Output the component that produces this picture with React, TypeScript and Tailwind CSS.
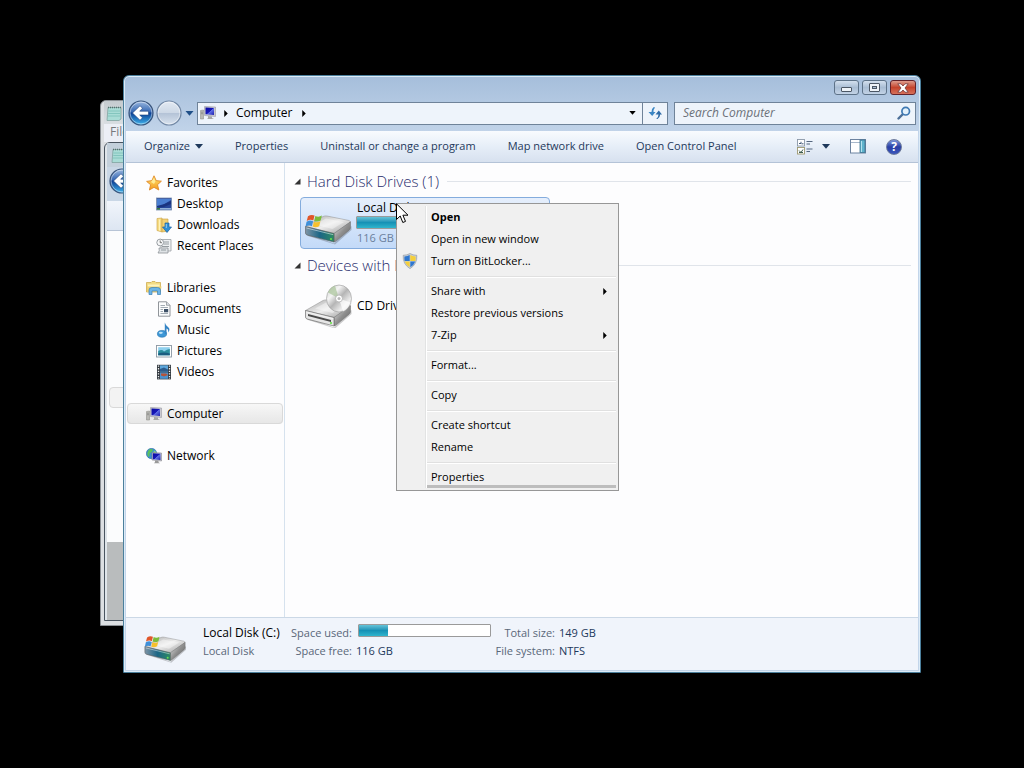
import React, { useState } from 'react';

type IconProps = { className?: string };

const WinFlag: React.FC = () => (
  <g>
    <path d="M3 3.500Q7 .5 11 2.500L9.500 8.500Q6 6.500 1.500 9Z" fill="#e0562a" />
    <path d="M12 3Q16 5 20 2.500L18.500 8.500Q14.500 10.500 10.500 9Z" fill="#7cbb3a" />
    <path d="M1.300 10Q5.500 7.500 9.200 9.500L7.800 15.500Q4 13.500 0 16Z" fill="#3f8fd8" />
    <path d="M10.300 10Q14 11.500 18.200 9.500L16.700 15.500Q12.500 17.500 8.800 16Z" fill="#f6c02c" />
  </g>
);

const DiskBody: React.FC<{ front: string }> = ({ front }) => (
  <g>
    <path d="M2 25L30 35.500L47.500 18V22L31 36.500L4 28Z" fill="#000" opacity=".2" />
    <path d="M1.500 18.500L19 8.500Q21 7.600 23 8L45 12.500Q47 13.200 46 14.500L30 25.500Z" fill="url(#diskTop)" stroke="#8d8d8d" strokeWidth=".5" />
    <path d="M30 25.500L46.500 13.800V19.500Q46.500 21 45 22.300L31.500 33.500L30 34Z" fill="url(#diskSide)" stroke="#6d6d6d" strokeWidth=".5" />
    <path d="M1.500 18.500L30 25.500V34L3 27Q1.500 26.400 1.500 25Z" fill={front} stroke="#5b5b5b" strokeWidth=".6" />
    <path d="M11 16.500L22 10.500L40 14L28.500 21Z" fill="#fff" opacity=".4" />
    <path d="M2.500 20L29.300 26.700" stroke="#fff" strokeOpacity=".7" strokeWidth=".7" />
    <circle cx="27" cy="31" r="1.100" fill="#6be04c" />
  </g>
);

const SharedDefs: React.FC = () => (
  <svg className="absolute size-0" aria-hidden="true">
    <defs>
      <linearGradient id="diskTop" x1="0" y1="0" x2="1" y2="1">
        <stop offset="0" stopColor="#a9a9a9" />
        <stop offset=".5" stopColor="#ededed" />
        <stop offset="1" stopColor="#9d9d9d" />
      </linearGradient>
      <linearGradient id="diskSide" x1="0" y1="0" x2="1" y2="1">
        <stop offset="0" stopColor="#eee" />
        <stop offset=".5" stopColor="#8f8f8f" />
        <stop offset="1" stopColor="#5f5f5f" />
      </linearGradient>
      <linearGradient id="diskTeal" x1="0" y1="0" x2="1" y2="0">
        <stop offset="0" stopColor="#7e94a6" />
        <stop offset=".5" stopColor="#1c6686" />
        <stop offset="1" stopColor="#2d8a63" />
      </linearGradient>
      <linearGradient id="cdFace" x1="0" y1="0" x2="1" y2="1">
        <stop offset="0" stopColor="#c9cdc9" />
        <stop offset=".3" stopColor="#f4f4f4" />
        <stop offset=".5" stopColor="#b5b5b5" />
        <stop offset=".75" stopColor="#efefef" />
        <stop offset="1" stopColor="#bcbcbc" />
      </linearGradient>
      <linearGradient id="orb" x1="0" y1="0" x2="0" y2="1">
        <stop offset="0" stopColor="#9db9e0" />
        <stop offset=".45" stopColor="#3769b4" />
        <stop offset=".5" stopColor="#0c3f93" />
        <stop offset="1" stopColor="#3fb4ee" />
      </linearGradient>
      <linearGradient id="orbOff" x1="0" y1="0" x2="0" y2="1">
        <stop offset="0" stopColor="#e3eaf3" />
        <stop offset=".48" stopColor="#cdd8e6" />
        <stop offset=".5" stopColor="#b3c2d6" />
        <stop offset="1" stopColor="#d9e3ef" />
      </linearGradient>
      <linearGradient id="star" x1="0" y1="0" x2="0" y2="1">
        <stop offset="0" stopColor="#ffe675" />
        <stop offset="1" stopColor="#f59a1c" />
      </linearGradient>
      <linearGradient id="screen" x1="0" y1="0" x2="1" y2="1">
        <stop offset="0" stopColor="#0a0aa0" />
        <stop offset=".5" stopColor="#1717b8" />
        <stop offset=".55" stopColor="#5f6fe6" />
        <stop offset="1" stopColor="#1d1dae" />
      </linearGradient>
    </defs>
  </svg>
);

const HardDiskIcon: React.FC<IconProps> = ({ className }) => (
  <svg viewBox="0 0 48 38" className={className} aria-hidden="true">
    <DiskBody front="url(#diskTeal)" />
    <g transform="translate(1.500 5.500) scale(.82)">
      <WinFlag />
    </g>
  </svg>
);

const CdDriveIcon: React.FC<IconProps> = ({ className }) => (
  <svg viewBox="0 0 48 44" className={className} aria-hidden="true">
    <g transform="translate(0 8)">
      <DiskBody front="#e6e6e6" />
      <path d="M4 22L27 28V30L4 24Z" fill="#4a4a4a" />
    </g>
    <ellipse cx="35" cy="14.500" rx="12.500" ry="13.500" fill="url(#cdFace)" stroke="#999" strokeWidth=".6" />
    <path d="M35 14.500L24 8.500Q27 2.500 31 1.700Z" fill="#a9c59a" opacity=".7" />
    <path d="M35 14.500L46.500 18.500Q44 25.500 39 27.500Z" fill="#fff" opacity=".7" />
    <circle cx="35" cy="14.500" r="3.500" fill="#fff" stroke="#aaa" strokeWidth=".7" />
    <circle cx="35" cy="14.500" r="1.500" fill="#b9b9b9" />
  </svg>
);

const ComputerIcon: React.FC<IconProps> = ({ className }) => (
  <svg viewBox="0 0 16 16" className={className} aria-hidden="true">
    <path d="M.5 5.500L3.500 5V14H.5Z" fill="#b9b9b5" stroke="#85857f" strokeWidth=".5" />
    <path d="M1.200 7.200H2.800M1.200 8.700H2.800" stroke="#666" strokeWidth=".6" />
    <path d="M4.500 1.500L15.500 2V11.500L4.500 10.500Z" fill="#c9c9d2" stroke="#8c8c94" strokeWidth=".5" />
    <path d="M5.500 2.500L14 3V10L5.500 9.300Z" fill="url(#screen)" />
    <path d="M8 11L12 11.400V13L14 14H7L8 13Z" fill="#a7a7a7" />
  </svg>
);

const StarIcon: React.FC<IconProps> = ({ className }) => (
  <svg viewBox="0 0 16 16" className={className} aria-hidden="true">
    <path d="M8 .8L10.200 5.600L15.400 6.200L11.500 9.700L12.800 15L8 12.300L3.400 15L4.600 9.700L.6 6.400L5.900 5.600Z" fill="url(#star)" stroke="#e08a2a" strokeWidth=".9" strokeLinejoin="round" />
    <path d="M8 3L9.400 6.400L8 9L5 7Z" fill="#fff4a8" opacity=".8" />
  </svg>
);

const DesktopIcon: React.FC<IconProps> = ({ className }) => (
  <svg viewBox="0 0 16 16" className={className} aria-hidden="true">
    <rect x=".5" y="2" width="15" height="12" fill="#27479b" stroke="#7b8fb0" strokeWidth=".8" />
    <path d="M1 12Q7 9 15 4V3H1Z" fill="#4a7ed1" />
    <path d="M1 10Q8 9 15 5V8Q8 12 1 11.500Z" fill="#1a3480" />
    <rect x="1" y="12" width="14" height="1.600" fill="#8fb0d8" />
    <rect x="1" y="12" width="3" height="1.600" fill="#3b7b3f" />
  </svg>
);

const DownloadsIcon: React.FC<IconProps> = ({ className }) => (
  <svg viewBox="0 0 16 16" className={className} aria-hidden="true">
    <path d="M1 1.500L6 1V15L1 13.500Z" fill="#f6dc85" stroke="#c99f3e" strokeWidth=".6" />
    <path d="M6 2H12V14L6 15Z" fill="#f2d173" stroke="#c99f3e" strokeWidth=".6" />
    <path d="M3.500 2.500V13.500" stroke="#fff2b8" />
    <path d="M9 6H13V10H15.500L11 15.500L6.500 10H9Z" fill="#2f8fd6" stroke="#1b62a5" strokeWidth=".7" />
    <path d="M10.300 7V11" stroke="#9fd4f5" strokeWidth=".9" />
  </svg>
);

const RecentIcon: React.FC<IconProps> = ({ className }) => (
  <svg viewBox="0 0 16 16" className={className} aria-hidden="true">
    <path d="M5 1.500H15V13H5Z" fill="#eef0f2" stroke="#9aa0a5" strokeWidth=".8" />
    <path d="M3 10H12V15H2Q4 13 3 10Z" fill="#dfe3e6" stroke="#8d9398" strokeWidth=".8" />
    <path d="M8 4H13M8 6H13M6 8.500H13M5 12H10" stroke="#8b9297" strokeWidth=".9" />
    <circle cx="4.200" cy="4.500" r="3.400" fill="#f7f8f9" stroke="#8d9398" strokeWidth=".9" />
    <path d="M4.200 2.500V4.700H6" fill="none" stroke="#555" strokeWidth=".8" />
  </svg>
);

const LibrariesIcon: React.FC<IconProps> = ({ className }) => (
  <svg viewBox="0 0 16 16" className={className} aria-hidden="true">
    <path d="M.5 2.500H5L6 1.500H9L10 2.500H14.500V12H.5Z" fill="#f3dc84" stroke="#c9a544" strokeWidth=".7" />
    <path d="M2 4.500H13.500V8H2Z" fill="#fdf3bd" />
    <path d="M1 6.500H15.500L14.500 12H1Z" fill="#efd172" />
    <path d="M3 14.500V10Q3 7.500 6 7.500H11.500Q14.500 7.500 14.500 10V14.500H11.500V11H6V14.500Z" fill="#6db5e6" stroke="#3a7fb8" strokeWidth=".7" />
  </svg>
);

const DocumentIcon: React.FC<IconProps> = ({ className }) => (
  <svg viewBox="0 0 16 16" className={className} aria-hidden="true">
    <path d="M2.500 .8H10.500L14 4.300V15.200H2.500Z" fill="#fbfcfd" stroke="#85898e" strokeWidth=".9" />
    <path d="M10.500 .8V4.300H14" fill="#d7dde3" stroke="#85898e" strokeWidth=".7" />
    <path d="M4.500 4.500H9M4.500 6.500H12M4.500 8.500H7M4.500 10.500H7M4.500 12.500H12" stroke="#8c969f" strokeWidth=".8" />
    <rect x="8" y="8" width="4.200" height="3.300" fill="#3c4f66" />
  </svg>
);

const MusicIcon: React.FC<IconProps> = ({ className }) => (
  <svg viewBox="0 0 16 16" className={className} aria-hidden="true">
    <ellipse cx="6" cy="11.800" rx="4.600" ry="3.400" fill="#3d97d6" stroke="#2272ad" strokeWidth=".6" />
    <ellipse cx="4.800" cy="10.800" rx="2" ry="1.100" fill="#bfe3f8" />
    <path d="M8.800 12V.5Q9.500 3.500 12.500 5.500Q14.500 7.500 12.200 10.500Q12.600 7 10.500 6.500V12Z" fill="#3584c4" />
  </svg>
);

const PicturesIcon: React.FC<IconProps> = ({ className }) => (
  <svg viewBox="0 0 16 16" className={className} aria-hidden="true">
    <rect x=".5" y="2.500" width="15" height="11.500" fill="#fff" stroke="#8a97a3" strokeWidth=".9" />
    <rect x="2.200" y="4.200" width="11.600" height="8" fill="#8fd0ee" />
    <path d="M2.200 8Q6 6 8 8.500Q11 6 13.800 6V12.200H2.200Z" fill="#2d8f9e" />
    <path d="M2.200 10.500Q8 8.500 13.800 10.500V12.200H2.200Z" fill="#1b5d80" />
  </svg>
);

const VideosIcon: React.FC<IconProps> = ({ className }) => (
  <svg viewBox="0 0 16 16" className={className} aria-hidden="true">
    <rect x="1" y=".8" width="14" height="14.600" fill="#333a41" />
    <rect x="4" y="1.300" width="8" height="6.300" fill="#5ea7dc" />
    <rect x="4" y="8.400" width="8" height="6.400" fill="#4b93cf" />
    <path d="M4 7.600V5L8 3.500L12 5.500V7.600Z" fill="#2d5c8c" />
    <path d="M5 9.500H10L12 11L8 12.500L5 11.500Z" fill="#b5543a" />
    <path d="M2.500 1.500V15M13.500 1.500V15" stroke="#f1f1f1" strokeWidth="1.300" strokeDasharray="1.300 1.300" />
  </svg>
);

const NetworkIcon: React.FC<IconProps> = ({ className }) => (
  <svg viewBox="0 0 16 16" className={className} aria-hidden="true">
    <circle cx="5.500" cy="5.500" r="5.200" fill="#3c8fd0" stroke="#24639c" strokeWidth=".5" />
    <path d="M3 1.500Q6 .5 7 2Q6 5 3.500 5.500Q4 8 2.500 9Q0 6 3 1.500Z" fill="#5cc25a" />
    <path d="M8 2.500Q10 3 10.300 5H7.500Z" fill="#8ad97c" />
    <path d="M6 4.500L15.500 5V13L6 12Z" fill="#c9c9d2" stroke="#77777f" strokeWidth=".5" />
    <path d="M6.800 5.300L14.500 5.800V12L6.800 11.200Z" fill="url(#screen)" />
    <path d="M9 12.500L12.500 13V14.200L14 15.300H8L9 14Z" fill="#9a9a9a" />
  </svg>
);

const ShieldIcon: React.FC<IconProps> = ({ className }) => (
  <svg viewBox="0 0 16 16" className={className} aria-hidden="true">
    <path d="M8 .5Q11 2.300 14.800 2.300Q15.500 11 8 15.700Q.5 11 1.200 2.300Q5 2.300 8 .5Z" fill="#c9d0d8" stroke="#8b939c" strokeWidth=".6" />
    <path d="M7.700 2V8H2.600Q2.200 6 2.400 3.500Q5.500 3.400 7.700 2Z" fill="#2f77cf" />
    <path d="M8.300 2Q10.500 3.400 13.600 3.500Q13.800 6 13.400 8H8.300Z" fill="#f5cf3a" />
    <path d="M2.700 8.500H7.700V14.300Q4 12 2.700 8.500Z" fill="#f5cf3a" />
    <path d="M8.300 8.500H13.300Q12 12 8.300 14.300Z" fill="#2f77cf" />
  </svg>
);

const NotepadIcon: React.FC<IconProps> = ({ className }) => (
  <svg viewBox="0 0 16 16" className={className} aria-hidden="true">
    <path d="M2 2.500H15V14L13 15.500H1Z" fill="#a9dcd6" stroke="#7a9c9a" strokeWidth=".7" />
    <path d="M2.500 6H14M2.300 8.500H14M2 11H14" stroke="#7fc2bb" strokeWidth=".9" />
    <path d="M2 2.500H15" stroke="#55706e" strokeWidth="1.600" strokeDasharray="1 1" />
  </svg>
);

const OrbIcon: React.FC<IconProps & { active?: boolean }> = ({ className, active }) => (
  <svg viewBox="0 0 26 26" className={className} aria-hidden="true">
    <circle cx="13" cy="13" r="12" fill={active ? 'url(#orb)' : 'url(#orbOff)'} stroke={active ? '#3a557c' : '#7288a5'} strokeWidth="1.200" />
    <circle cx="13" cy="13" r="10.900" fill="none" stroke="#fff" strokeOpacity=".45" />
    {active && <path d="M4.500 13L12 5.800L14.500 8.200L11.700 11.200H20.500V15H11.700L14.500 17.800L12 20.200Z" fill="#fff" stroke="#1c3f7d" strokeWidth=".6" />}
  </svg>
);

const CursorIcon: React.FC<IconProps> = ({ className }) => (
  <svg viewBox="0 0 13 21" className={className} aria-hidden="true">
    <path d="M.5 .8V16.500L4.200 13L6.800 19.500L9.500 18.400L6.900 12.200H12Z" fill="#fff" stroke="#000" strokeWidth="1" />
  </svg>
);

const DownArrow: React.FC<IconProps> = ({ className }) => (
  <svg viewBox="0 0 8 5" className={className} aria-hidden="true">
    <path d="M0 0H8L4 4.700Z" fill="currentColor" />
  </svg>
);

const RightArrow: React.FC<IconProps> = ({ className }) => (
  <svg viewBox="0 0 4 8" className={className} aria-hidden="true">
    <path d="M0 0V8L4 4Z" fill="currentColor" />
  </svg>
);

const navGroups = [
  {
    title: 'Favorites',
    icon: StarIcon,
    items: [
      { label: 'Desktop', icon: DesktopIcon },
      { label: 'Downloads', icon: DownloadsIcon },
      { label: 'Recent Places', icon: RecentIcon },
    ],
  },
  {
    title: 'Libraries',
    icon: LibrariesIcon,
    items: [
      { label: 'Documents', icon: DocumentIcon },
      { label: 'Music', icon: MusicIcon },
      { label: 'Pictures', icon: PicturesIcon },
      { label: 'Videos', icon: VideosIcon },
    ],
  },
  { title: 'Computer', icon: ComputerIcon, items: [] },
  { title: 'Network', icon: NetworkIcon, items: [] },
];

const menuSections = [
  [{ label: 'Open', bold: true }, { label: 'Open in new window' }, { label: 'Turn on BitLocker...', shield: true }],
  [{ label: 'Share with', sub: true }, { label: 'Restore previous versions' }, { label: '7-Zip', sub: true }],
  [{ label: 'Format...' }],
  [{ label: 'Copy' }],
  [{ label: 'Create shortcut' }, { label: 'Rename' }],
  [{ label: 'Properties', marked: true }],
] as { label: string; bold?: boolean; shield?: boolean; sub?: boolean; marked?: boolean }[][];

const BackgroundWindow: React.FC = () => (
  <div className="absolute top-[100px] bottom-[142px] left-[100px] flex w-40 flex-col rounded-tl-md border border-[#8a8f94] bg-[#dcdfe2] pb-1 pl-[3px] text-xs">
    <div className="flex h-[23px] items-center bg-linear-to-b from-[#c5cbcf] to-[#d9dee2] pl-0.5">
      <NotepadIcon className="size-4" />
    </div>
    <div className="h-[18px] bg-[#eceff6] pl-1.5 leading-4 text-[#77797c]">File</div>
    <div className="flex grow flex-col rounded-tl-md border border-[#49545f] bg-[#dfe5ea] pl-0.5">
      <div className="flex h-6 items-center bg-[#c3d0db] pl-1">
        <NotepadIcon className="size-4" />
      </div>
      <div className="flex h-[34px] items-start bg-[#c9d7e6] pt-px pl-0.5">
        <OrbIcon active className="size-[26px]" />
      </div>
      <div className="h-[30px] border-b border-[#b7c4d6] bg-linear-to-b from-[#f1f5fb] to-[#dde6f2]" />
      <div className="grow bg-[#fbfcfd] pt-[156px] pl-0.5">
        <div className="h-[21px] rounded-sm border border-[#d9d9d9] bg-[#f3f3f3]" />
      </div>
      <div className="h-[78px] bg-[#b9bcbd]" />
    </div>
  </div>
);

const TitleBar: React.FC = () => (
  <div className="flex h-[21px] justify-end gap-[3px] pt-1 pr-0.5">
    <button aria-label="Minimize" className="grid h-[15px] w-[25px] place-items-center rounded-[3px] border border-[#5d7288] bg-linear-to-b from-[#d3e0ee] via-[#a9bdd4] to-[#c3d3e6]">
      <span className="mt-1 h-[5px] w-[11px] rounded-[1px] border border-[#4c5765] bg-[#eef3f8]" />
    </button>
    <button aria-label="Maximize" className="grid h-[15px] w-[25px] place-items-center rounded-[3px] border border-[#5d7288] bg-linear-to-b from-[#d3e0ee] via-[#a9bdd4] to-[#c3d3e6]">
      <span className="grid h-[9px] w-[11px] place-items-center rounded-[1px] border border-[#4c5765] bg-[#eef3f8]">
        <span className="h-[3px] w-[5px] border border-[#4c5765] bg-[#a9bdd4]" />
      </span>
    </button>
    <button aria-label="Close" className="grid h-[15px] w-[26px] place-items-center rounded-[3px] border border-[#63222a] bg-linear-to-b from-[#dd9a8c] via-[#c4432c] to-[#d6705a]">
      <svg viewBox="0 0 12 10" className="h-2.5 w-3" aria-hidden="true">
        <path d="M.8 .8H4L6 3L8 .8H11.200L8 5L11.200 9.200H8L6 7L4 9.200H.8L4 5Z" fill="#fff" stroke="#6e3a3c" strokeWidth=".8" />
      </svg>
    </button>
  </div>
);

const NavBar: React.FC = () => (
  <div className="flex h-[34px] items-center pr-0.5 pb-0.5 pl-0.5">
    <div className="flex items-center gap-0.5">
      <button aria-label="Back">
        <OrbIcon active className="size-[26px]" />
      </button>
      <button aria-label="Forward">
        <OrbIcon className="size-[26px]" />
      </button>
      <button aria-label="Recent pages" className="pr-[3px] pl-px text-[#1f4f87]">
        <DownArrow className="h-[5px] w-[9px]" />
      </button>
    </div>
    <div className="flex h-[23px] grow items-stretch border border-[#6f8399] bg-[#eef4fb]">
      <div className="flex grow items-center pl-0.5">
        <ComputerIcon className="size-4" />
        <RightArrow className="ml-2 h-[7px] w-1" />
        <button className="px-2">Computer</button>
        <RightArrow className="ml-px h-[7px] w-1" />
      </div>
      <button aria-label="Previous locations" className="px-1.5">
        <DownArrow className="h-1 w-[7px]" />
      </button>
      <button aria-label="Refresh" className="grid w-[25px] place-items-center border-l border-[#6f8399]">
        <svg viewBox="0 0 14 14" className="size-3.5" aria-hidden="true">
          <path d="M5.800 1Q3.500 2.500 3.500 6H.5L4.200 10L7.500 6H5.500Q5.300 3.500 7 1.500Z" fill="#3b86c4" />
          <path d="M8.200 13Q10.500 11.500 10.500 8.500H7.500L10.800 4.500L14 8.500H12.200Q12 11.500 9.500 13Z" fill="#2f6ca8" />
        </svg>
      </button>
    </div>
    <label className="ml-1.5 flex h-[23px] w-[242px] items-center border border-[#6f8399] bg-[#eef4fb] pr-1 pl-2">
      <input type="text" aria-label="Search Computer" placeholder="Search Computer" className="w-full min-w-0 grow bg-transparent italic outline-none placeholder:text-[#6b7078]" />
      <svg viewBox="0 0 14 14" className="size-3.5 shrink-0" fill="none" aria-hidden="true">
        <path d="M1.500 12.500L6 8" stroke="#4c6f98" strokeWidth="2.400" strokeLinecap="round" />
        <circle cx="8.700" cy="5.200" r="3.800" fill="#e3f1fb" stroke="#3f79b3" strokeWidth="1.700" />
      </svg>
    </label>
  </div>
);

const Toolbar: React.FC = () => (
  <div className="flex h-8 items-center gap-8 border-b border-[#b4c3d7] bg-linear-to-b from-[#f8fbfe] via-[#e6eef8] to-[#d7e1ef] pr-4 pl-[18px] text-[11px] text-[#1e395b]">
    <button className="flex items-center gap-[5px] whitespace-nowrap">
      Organize <DownArrow className="h-[5px] w-2" />
    </button>
    <button className="whitespace-nowrap">Properties</button>
    <button className="whitespace-nowrap">Uninstall or change a program</button>
    <button className="whitespace-nowrap">Map network drive</button>
    <button className="whitespace-nowrap">Open Control Panel</button>
    <div className="ml-auto flex items-center gap-5">
      <button aria-label="Change your view" className="flex items-center gap-[9px]">
        <svg viewBox="0 0 16 16" className="size-4" aria-hidden="true">
          <rect x=".5" y=".5" width="7" height="6.500" fill="#fff" stroke="#8b98a8" strokeWidth=".9" />
          <rect x=".5" y="8.500" width="7" height="6.500" fill="#fff" stroke="#9c9870" strokeWidth=".9" />
          <path d="M2 4.500H4V2.800M4.500 4.800H6.500" fill="none" stroke="#445a78" />
          <path d="M2 11.500L4 13.500L6 10.500M2 13.500H6" fill="none" stroke="#3d5d50" />
          <path d="M9.500 2.500H15.500M9.500 5H13M9.500 10H15.500M9.500 12.500H13" stroke="#55677f" />
        </svg>
        <DownArrow className="h-[5px] w-2" />
      </button>
      <button aria-label="Show the preview pane">
        <svg viewBox="0 0 16 15" className="h-[15px] w-4" aria-hidden="true">
          <rect x=".5" y=".5" width="15" height="13.500" fill="#fff" stroke="#6d83a0" />
          <path d="M1 3.500H10" stroke="#a8b8cb" />
          <rect x="10" y="1" width="5" height="12.500" fill="#5fb3cc" stroke="#38708f" strokeWidth=".8" />
          <path d="M11.500 2V13" stroke="#b3e2ee" />
        </svg>
      </button>
      <button aria-label="Get help" className="grid size-4 place-items-center rounded-full border border-[#6c7a9c] bg-linear-to-b from-[#7f97dc] via-[#2a3fa4] to-[#3b56bd] text-xs leading-none font-bold text-white">
        ?
      </button>
    </div>
  </div>
);

const Sidebar: React.FC = () => (
  <nav className="w-[159px] shrink-0 border-r border-[#d6e2ee] pt-[9px]">
    <ul className="flex flex-col gap-[21px]">
      {navGroups.map(group => (
        <li key={group.title} className="pr-px pl-px">
          <button
            className={`flex h-[21px] w-full items-center gap-[5px] pl-[19px] ${
              group.title === 'Computer' ? 'rounded-sm bg-linear-to-b from-[#f8f8f8] to-[#e6e6e6] outline outline-[#d9d9d9] -outline-offset-1' : ''
            }`}
          >
            <group.icon className="size-4" />
            {group.title}
          </button>
          {group.items.map(item => (
            <button key={item.label} className="flex h-[21px] w-full items-center gap-[5px] pl-[29px]">
              <item.icon className="size-4" />
              {item.label}
            </button>
          ))}
        </li>
      ))}
    </ul>
  </nav>
);

const GroupHeader: React.FC<{ title: string }> = ({ title }) => (
  <h2 className="flex h-7 items-center text-[15px] font-light text-[#1f2a6b]">
    <svg viewBox="0 0 7 7" className="mr-1.5 size-[7px]" aria-hidden="true">
      <path d="M6.500 .5V6.500H.5Z" fill="#333" />
    </svg>
    <span className="whitespace-nowrap">{title}</span>
    <span className="ml-2 h-px grow bg-[#e0e4ea]" />
  </h2>
);

const CapacityBar: React.FC<{ used: number; className: string }> = ({ used, className }) => (
  <div className={`rounded-[1px] border border-[#9a9a9a] bg-white ${className}`}>
    <div className="h-full bg-linear-to-b from-[#63c3d8] via-[#1691b5] to-[#2fb5cd]" style={{ width: `${used}%` }} />
  </div>
);

const FileList: React.FC = () => (
  <main className="grow pt-1 pr-[7px] pl-[9px]">
    <GroupHeader title="Hard Disk Drives (1)" />
    <div className="mt-0.5 ml-1.5 flex h-[52px] w-[250px] rounded-sm border border-[#84acdd] bg-linear-to-b from-[#e6effc] to-[#c3daf8] pl-[3px]">
      <HardDiskIcon className="mt-2.5 h-[38px] w-12" />
      <div className="grow pt-0.5 pr-2 pl-1">
        <p className="pl-px leading-4">Local Disk (C:)</p>
        <CapacityBar used={22} className="h-[13px]" />
        <p className="pl-px text-[11px] leading-[18px] text-[#6b7f9c]">116 GB free of 149 GB</p>
      </div>
    </div>
    <div className="mt-0.5">
      <GroupHeader title="Devices with Removable Storage (1)" />
    </div>
    <div className="mt-px ml-1.5 flex h-[52px] w-[250px] items-center pl-1">
      <CdDriveIcon className="h-11 w-12" />
      <p className="pl-[5px]">CD Drive (D:)</p>
    </div>
  </main>
);

const DetailsPane: React.FC = () => (
  <footer className="flex h-[53px] items-start border-t border-[#cbd8e6] bg-[#f0f4fb] pl-[17px] text-[#5a6779]">
    <HardDiskIcon className="mt-3 h-[34px] w-11" />
    <div className="ml-4 grid grid-cols-[84px_61px_135px_60px_auto] gap-x-1 pt-1.5 text-[11px] leading-[18px] whitespace-nowrap">
      <span className="text-xs leading-[18px] text-black">Local Disk (C:)</span>
      <span className="text-right">Space used:</span>
      <CapacityBar used={22} className="ml-0.5 h-[13px]" />
      <span className="text-right">Total size:</span>
      <span className="text-[#1e395b]">149 GB</span>
      <span>Local Disk</span>
      <span className="text-right">Space free:</span>
      <span className="text-[#1e395b]">116 GB</span>
      <span className="text-right">File system:</span>
      <span className="text-[#1e395b]">NTFS</span>
    </div>
  </footer>
);

const ContextMenu: React.FC<{ onClose: () => void }> = ({ onClose }) => (
  <div role="menu" className="absolute top-[203px] left-[396px] w-[223px] border border-[#979797] bg-[#f0f0f0] p-0.5 text-[11px]">
    {menuSections.map((section, i) => (
      <div key={i}>
        {i > 0 && (
          <div className="flex h-2 pl-[26px]">
            <div className="w-0.5 border-l border-[#e2e3e3] bg-white" />
            <div className="mt-1 h-0.5 grow border-t border-[#e0e0e0] bg-white" />
          </div>
        )}
        {section.map(item => (
          <button key={item.label} role="menuitem" onClick={onClose} className="flex h-[22px] w-full items-stretch text-left">
            <span className="flex w-[26px] shrink-0 items-center pl-[3px]">{item.shield && <ShieldIcon className="size-4" />}</span>
            <span className="w-0.5 shrink-0 border-l border-[#e2e3e3] bg-white" />
            <span className={`flex grow items-center pr-[9px] pl-1 ${item.marked ? 'border-b-[3px] border-[#bdbdbd] pt-[3px]' : ''} ${item.bold ? 'font-bold' : ''}`}>
              {item.label}
              {item.sub && <RightArrow className="ml-auto h-[7px] w-1" />}
            </span>
          </button>
        ))}
      </div>
    ))}
  </div>
);

const App: React.FC = () => {
  const [menuOpen, setMenuOpen] = useState(true);

  return (
    <div className="relative h-screen min-h-[600px] overflow-hidden bg-black font-['Open_Sans','Noto_Sans',sans-serif] text-xs text-black">
      <SharedDefs />
      <BackgroundWindow />
      <div className="absolute top-[75px] right-[103px] bottom-[95px] left-[123px] flex flex-col rounded-t-md border border-[#4b7f9c] bg-linear-to-b from-[#a5bedb] to-[#c3d5ea] to-[60px] px-0.5 pb-0.5 shadow-[inset_0_0_0_1px_#dcebf7]">
        <TitleBar />
        <NavBar />
        <Toolbar />
        <div className="flex min-h-0 grow bg-[#fdfdfe]">
          <Sidebar />
          <FileList />
        </div>
        <DetailsPane />
      </div>
      {menuOpen && <ContextMenu onClose={() => setMenuOpen(false)} />}
      <CursorIcon className="absolute top-[203px] left-[396px] h-[21px] w-[13px]" />
    </div>
  );
};

export default App;
